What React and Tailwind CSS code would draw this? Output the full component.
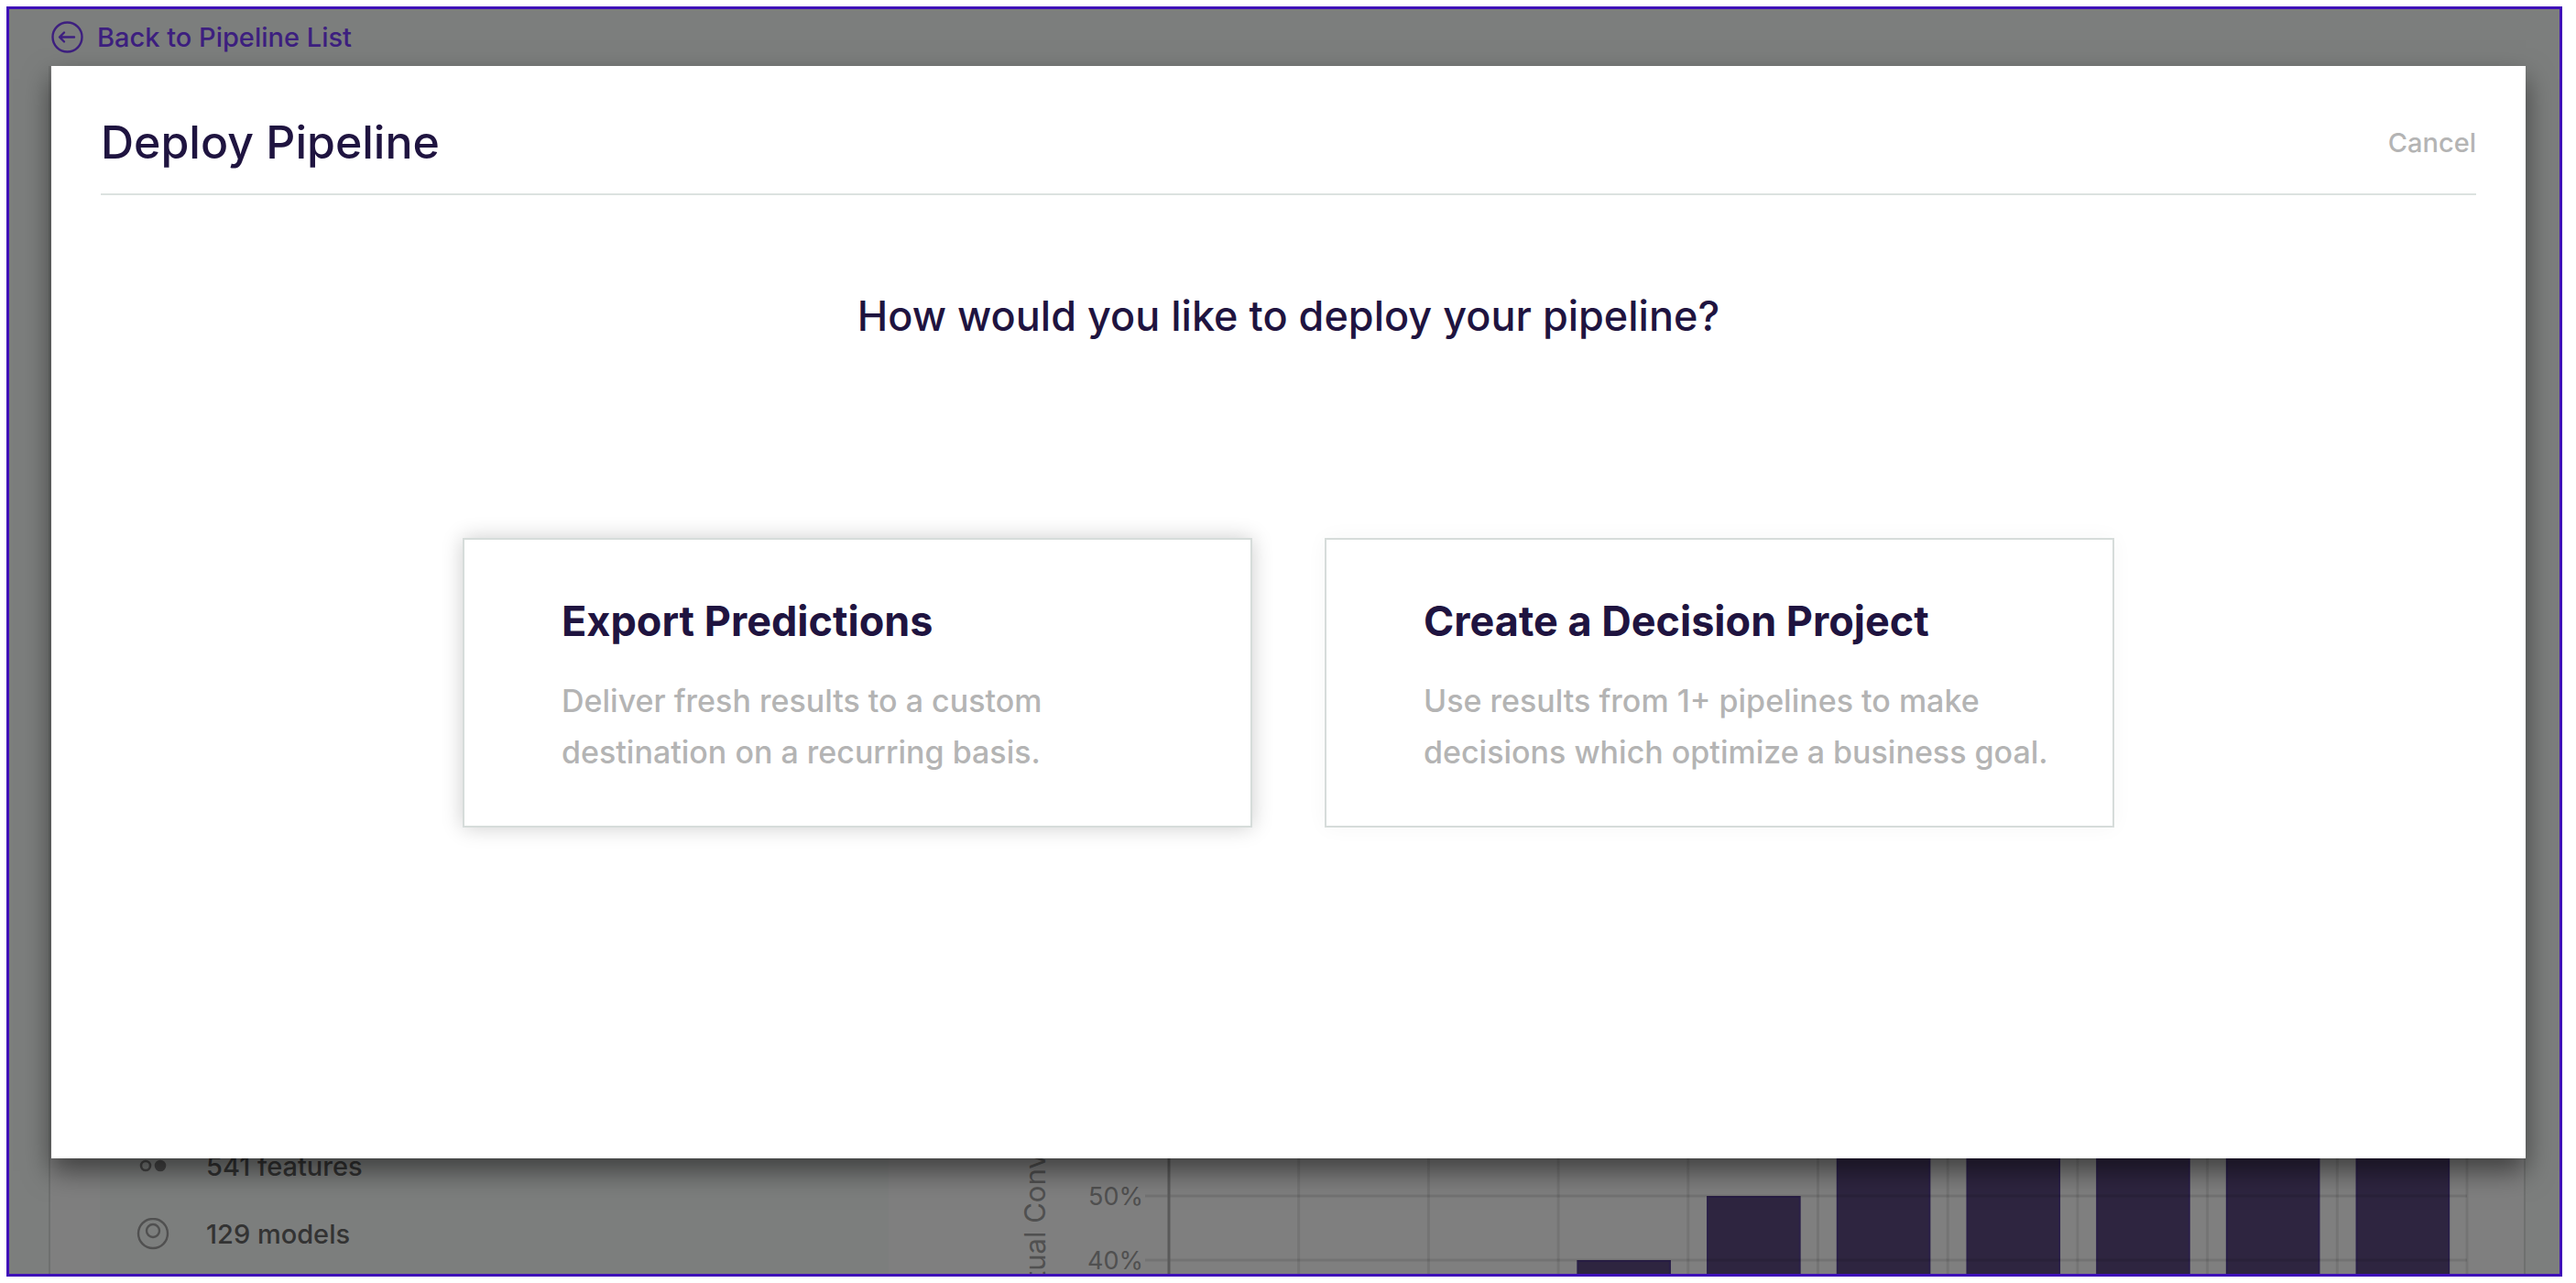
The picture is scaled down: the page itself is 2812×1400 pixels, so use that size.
const CARDS = [
  {
    title: "Export Predictions",
    lines: ["Deliver fresh results to a custom", "destination on a recurring basis."],
    active: true,
  },
  {
    title: "Create a Decision Project",
    lines: ["Use results from 1+ pipelines to make", "decisions which optimize a business goal."],
    active: false,
  },
];

// distance of each bar's top edge from the top of the plot
const BARS = [
  { bin: 3, top: 335 },
  { bin: 4, top: 265 },
  { bin: 5, top: 195 },
  { bin: 6, top: 160 },
  { bin: 7, top: 120 },
  { bin: 8, top: 80 },
  { bin: 9, top: 40 },
];

const TICKS = [
  { label: "50%", y: 265 },
  { label: "40%", y: 335 },
];

const GRID = [1, 2, 3, 4, 5, 6, 7, 8, 9, 10];

function BackIcon() {
  return (
    <svg className="size-9" viewBox="0 0 36 36" fill="none" stroke="currentColor" strokeWidth="2.4" strokeLinecap="round" strokeLinejoin="round">
      <circle cx="17.5" cy="17.5" r="16" />
      <path d="M25 17.5H9.5M14 12.5L9 17.5l5 5" />
    </svg>
  );
}

function FeaturesIcon() {
  return (
    <svg className="size-9" viewBox="0 0 36 36" fill="none" stroke="#8f8f8f" strokeWidth="2.6">
      <circle cx="10" cy="2" r="5" fill="#8f8f8f" />
      <circle cx="26" cy="2" r="5" />
      <circle cx="10" cy="17" r="5" />
      <circle cx="26" cy="17" r="5" fill="#8f8f8f" />
    </svg>
  );
}

function ModelsIcon() {
  return (
    <svg className="size-9" viewBox="0 0 36 36" fill="none" stroke="#a0a0a0" strokeWidth="2.4">
      <circle cx="18" cy="17" r="16" />
      <circle cx="18" cy="14" r="7" />
    </svg>
  );
}

function Chart() {
  return (
    <div className="flex flex-1 items-end pr-[62px]">
      <svg className="h-[350px] w-[306px] shrink-0 overflow-visible" fill="#a0a0a0">
        <text transform="translate(171 396) rotate(-90)" fontSize="31">
          Actual Conv
        </text>
        {TICKS.map((tick) => (
          <text key={tick.label} x="278" y={tick.y + 10} textAnchor="end" fontSize="27">
            {tick.label}
          </text>
        ))}
      </svg>
      <svg className="h-[350px] min-w-0 flex-1 overflow-visible">
        {BARS.map((bar) => (
          <rect
            key={bar.bin}
            x={`${bar.bin * 10 + 1.5}%`}
            y={bar.top + 1}
            width="7.1%"
            height={360 - bar.top}
            fill="#5c4a80"
            stroke="#543e90"
            strokeWidth="2"
          />
        ))}
        {GRID.map((n) => (
          <line key={n} x1={`${n * 10}%`} x2={`${n * 10}%`} y1="0" y2="350" stroke="#000" strokeOpacity="0.09" strokeWidth="3" />
        ))}
        {TICKS.map((tick) => (
          <line key={tick.label} x1="-26" x2="100%" y1={tick.y} y2={tick.y} stroke="#000" strokeOpacity="0.1" strokeWidth="3" />
        ))}
        <line x1="0" x2="0" y1="0" y2="350" stroke="#b4b4b4" strokeWidth="3" />
      </svg>
    </div>
  );
}

function PipelinePage() {
  return (
    <div className="flex h-full flex-col bg-[#f9fcfa] pr-[37px] pl-[43px]">
      <a href="#pipelines" className="flex h-[62px] shrink-0 items-center gap-3.5 self-start pl-[3px] text-[29px] font-medium text-[#7a3fff]">
        <BackIcon />
        Back to Pipeline List
      </a>
      <div className="flex flex-1 border-x-2 border-[#dce0de] bg-white pl-[54px]">
        <ul className="flex w-[861px] shrink-0 flex-col justify-end bg-[#f9fcfa] pb-1.5 pl-10 text-[29px] font-medium text-[#666]">
          <li className="flex h-[74px] items-center gap-10">
            <FeaturesIcon />
            541 features
          </li>
          <li className="flex h-[74px] items-center gap-10">
            <ModelsIcon />
            129 models
          </li>
        </ul>
        <Chart />
      </div>
    </div>
  );
}

function OptionCard({ title, lines, active }) {
  return (
    <button
      className={`flex-1 border-2 border-[#d6dcda] bg-white pt-[61px] pr-5 pb-[52px] pl-[106px] text-left ${
        active ? "shadow-[0_0_22px_rgba(0,0,0,0.2)]" : "shadow-[0_0_22px_rgba(0,0,0,0.04)]"
      }`}
    >
      <span className="block text-[45px] leading-[56px] font-bold">{title}</span>
      <span className="mt-[31px] block text-[34px] leading-[56px] font-medium text-[#b4b4b4]">
        {lines.map((line) => (
          <span key={line} className="block whitespace-nowrap">{line}</span>
        ))}
      </span>
    </button>
  );
}

function DeployModal() {
  return (
    <div
      role="dialog"
      aria-labelledby="deploy-title"
      className="bg-white px-[54px] pb-[361px] text-[#1f1440] shadow-[0_14px_28px_rgba(0,0,0,0.5)]"
    >
      <div className="flex h-[141px] items-center justify-between border-b-2 border-[#dce2e0] pt-7">
        <h1 id="deploy-title" className="text-[50px] font-medium">Deploy Pipeline</h1>
        <button className="text-[29px] font-medium text-[#b4b4b4]">Cancel</button>
      </div>
      <h2 className="mt-[104px] text-center text-[45px] leading-[56px] font-medium">
        How would you like to deploy your pipeline?
      </h2>
      <div className="mx-auto mt-[214px] flex max-w-[1803px] gap-[79px]">
        {CARDS.map((card) => (
          <OptionCard key={card.title} {...card} />
        ))}
      </div>
    </div>
  );
}

export default function App() {
  return (
    <div className="h-screen bg-white py-[7px] pr-[15px] pl-[7px] font-['Inter',sans-serif]">
      <div className="relative h-full overflow-hidden border-3 border-[#3f0fb8]">
        <PipelinePage />
        <div className="absolute inset-0 bg-black/50 pt-[62px] pr-[37px] pl-[46px]">
          <DeployModal />
        </div>
      </div>
    </div>
  );
}
